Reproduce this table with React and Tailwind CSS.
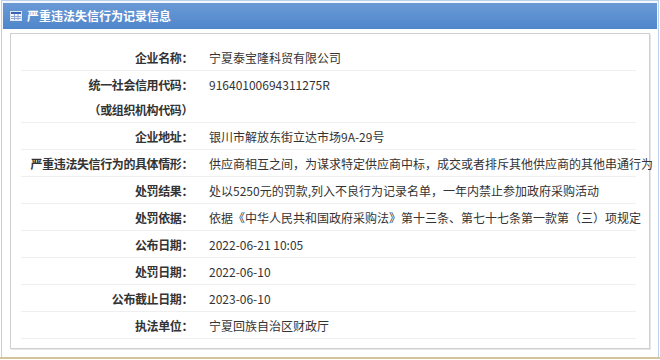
const rows = [
  { label: "企业名称：", value: "宁夏泰宝隆科贸有限公司" },
  { label: "统一社会信用代码：", value: "91640100694311275R", sub: "（或组织机构代码）" },
  { label: "企业地址：", value: "银川市解放东街立达市场9A-29号" },
  { label: "严重违法失信行为的具体情形：", value: "供应商相互之间，为谋求特定供应商中标，成交或者排斥其他供应商的其他串通行为" },
  { label: "处罚结果：", value: "处以5250元的罚款,列入不良行为记录名单，一年内禁止参加政府采购活动" },
  { label: "处罚依据：", value: "依据《中华人民共和国政府采购法》第十三条、第七十七条第一款第（三）项规定" },
  { label: "公布日期：", value: "2022-06-21 10:05" },
  { label: "处罚日期：", value: "2022-06-10" },
  { label: "公布截止日期：", value: "2023-06-10" },
  { label: "执法单位：", value: "宁夏回族自治区财政厅" },
];

function TableIcon() {
  return (
    <svg width="12" height="10" viewBox="0 0 12 10" className="shrink-0">
      <rect x="0.5" y="0.5" width="11" height="9" fill="#f4f6fb" stroke="#dfe6f3" />
      <rect x="1" y="1" width="10" height="2" fill="#3c64b4" />
      <path d="M1 5.5h10M1 7.5h10M4.5 3v6M8 3v6" stroke="#8ea8d8" strokeWidth="1" />
    </svg>
  );
}

export default function App() {
  return (
    <div
      className="w-[660px] h-[360px] bg-white overflow-hidden text-[12px] text-[#333]"
      style={{ fontFamily: '"Noto Sans CJK SC", "Liberation Sans", sans-serif' }}
    >
      <div className="h-[357px] mx-[1px] border-x border-t border-[#b9d1ec] bg-[#f4f8fc] flex flex-col">
        {/* Header */}
        <div className="h-[26px] mt-[2px] mx-[1px] bg-gradient-to-b from-[#6a9ad6] to-[#4f86cb] flex items-center gap-[5px] px-[7px]">
          <TableIcon />
          <span className="text-white font-bold text-[12px] leading-none">严重违法失信行为记录信息</span>
        </div>

        <div className="flex-1 bg-white px-[8px] pt-[4px] pb-[8px]">
          <div className="h-full border border-[#d0d0d0] shadow-[1px_1px_0_#e6e6e6] pl-[10px] pr-[13px] pt-[10px]">
            {rows.map((r) => (
              <div key={r.label} className="flex border-b border-[#efefef]">
                <div className="w-[172px] shrink-0 text-right font-bold leading-[25px] pt-[1px] tracking-[-0.4px]">
                  <div>{r.label}</div>
                  {r.sub && <div>{r.sub}</div>}
                </div>
                <div className="pl-[16px] leading-[25px] pt-[1px] whitespace-nowrap">{r.value}</div>
              </div>
            ))}
          </div>
        </div>
      </div>
      <div className="h-[3px] border-t-2 border-[#d4c49c] bg-white" />
    </div>
  );
}
